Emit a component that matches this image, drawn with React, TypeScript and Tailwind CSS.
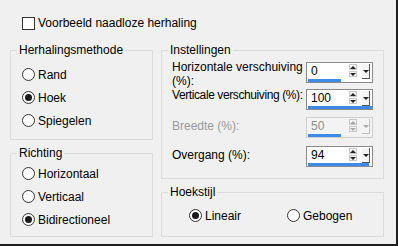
import React from "react";

const Radio: React.FC<{ label: string; checked?: boolean }> = ({ label, checked }) => (
  <div className="flex items-center h-[23px] gap-[3px]">
    <div className="w-[13px] h-[13px] rounded-full border border-[#333] bg-white flex items-center justify-center shrink-0">
      {checked && <div className="w-[7px] h-[7px] rounded-full bg-[#1a1a1a]" />}
    </div>
    <span>{label}</span>
  </div>
);

const Group: React.FC<{ title: string; className: string; children: React.ReactNode }> = ({
  title,
  className,
  children
}) => (
  <div className={"border border-[#dcdcdc] " + className}>
    <div className="-mt-[8px] ml-[6px] px-[2px] bg-[#f0f0f0] w-fit leading-[15px]">{title}</div>
    {children}
  </div>
);

const SpinBox: React.FC<{ value: string; bar: number; disabled?: boolean }> = ({
  value,
  bar,
  disabled
}) => {
  const tri = disabled ? "border-b-[#a8a8a8]" : "border-b-[#222]";
  const triDown = disabled ? "border-t-[#a8a8a8]" : "border-t-[#222]";
  return (
    <div
      className={
        "w-[67px] h-[21px] shrink-0 border flex flex-col " +
        (disabled ? "border-[#cfcfcf] bg-[#f3f3f3]" : "border-[#8a8a8a] bg-white")
      }
    >
      <div className="flex h-[15px]">
        <div
          className={
            "flex-1 pl-[4px] leading-[16px] " + (disabled ? "text-[#8d8d8d]" : "text-black")
          }
        >
          {value}
        </div>
        <div className="flex flex-col w-[8px] mt-[1px] gap-px">
          <div className="h-[6px] border border-[#c8c8c8] bg-[#f4f4f4] flex items-center justify-center">
            <div className={"w-0 h-0 border-x-[3px] border-x-transparent border-b-[3px] " + tri} />
          </div>
          <div className="h-[6px] border border-[#c8c8c8] bg-[#f4f4f4] flex items-center justify-center">
            <div className={"w-0 h-0 border-x-[3px] border-x-transparent border-t-[3px] " + triDown} />
          </div>
        </div>
        <div
          className={
            "w-[8px] ml-[5px] mr-[2px] mt-[1px] h-[15px] border-r border-b bg-[#f4f4f4] flex items-center justify-center " +
            (disabled ? "border-[#c0c0c0]" : "border-[#555]")
          }
        >
          <div className={"w-0 h-0 border-x-[3px] border-x-transparent border-t-[3px] " + triDown} />
        </div>
      </div>
      <div className="h-[3px] mt-px ml-px bg-[#3c8ce7]" style={{ width: bar }} />
    </div>
  );
};

export default function App() {
  return (
    <div className="w-[398px] h-[246px] bg-[#f0f0f0] border-r-2 border-b-2 border-[#1e1e1e] text-[12px] text-black font-['Liberation_Sans',sans-serif] overflow-hidden">
      <div className="flex items-center gap-[3px] pl-[22px] pt-[17px] h-[30px]">
        <div className="w-[13px] h-[13px] border border-[#333] bg-white" />
        <span className="leading-[13px]">Voorbeeld naadloze herhaling</span>
      </div>

      <div className="flex pl-[10px] pt-[20px] gap-[8px]">
        {/* left column */}
        <div className="w-[143px] flex flex-col">
          <Group title="Herhalingsmethode" className="h-[90px]">
            <div className="pl-[11px] mt-[5px] flex flex-col">
              <Radio label="Rand" />
              <Radio label="Hoek" checked />
              <Radio label="Spiegelen" />
            </div>
          </Group>
          <Group title="Richting" className="h-[84px] mt-[13px]">
            <div className="pl-[11px] mt-[1px] flex flex-col">
              <Radio label="Horizontaal" />
              <Radio label="Verticaal" />
              <Radio label="Bidirectioneel" checked />
            </div>
          </Group>
        </div>

        {/* right column */}
        <div className="w-[223px] flex flex-col">
          <Group title="Instellingen" className="h-[129px]">
            <div className="pl-[10px] pr-[10px] mt-[4px] flex flex-col">
              <div className="flex justify-between h-[27px]">
                <div className="leading-[14px] -mt-[2px]">
                  Horizontale verschuiving
                  <br />
                  (%):
                </div>
                <SpinBox value="0" bar={33} />
              </div>
              <div className="flex justify-between h-[28px]">
                <div className="leading-[14px] -mt-[1px] whitespace-nowrap tracking-[-0.4px]">
                  Verticale verschuiving (%):
                </div>
                <SpinBox value="100" bar={64} />
              </div>
              <div className="flex justify-between h-[29px]">
                <div className="leading-[14px] mt-[2px] text-[#9a9a9a]">Breedte (%):</div>
                <SpinBox value="50" bar={33} disabled />
              </div>
              <div className="flex justify-between h-[23px]">
                <div className="leading-[14px] mt-[2px]">Overgang (%):</div>
                <SpinBox value="94" bar={61} />
              </div>
            </div>
          </Group>
          <Group title="Hoekstijl" className="h-[45px] mt-[13px]">
            <div className="pl-[27px] mt-[4px] flex">
              <div className="w-[98px]">
                <Radio label="Lineair" checked />
              </div>
              <Radio label="Gebogen" />
            </div>
          </Group>
        </div>
      </div>
    </div>
  );
}
